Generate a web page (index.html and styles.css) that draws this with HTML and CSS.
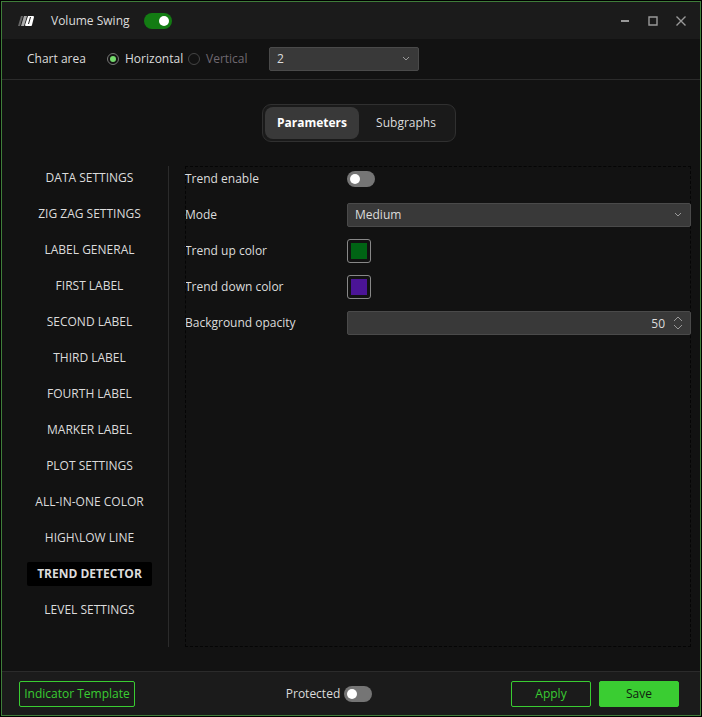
FILE: index.html
```html
<!DOCTYPE html>
<html lang="en">
<head>
    <meta charset="UTF-8">
    <meta name="viewport" content="width=device-width, initial-scale=1.0">
    <title>Volume Swing</title>
    <link rel="stylesheet" href="styles.css">
</head>
<body>
    <form class="window">
        <header class="titlebar">
            <svg class="logo" width="16" height="12" viewBox="0 0 16 12">
                <path d="M3 1h2L2 11H0z" fill="#666"/>
                <path d="M6 1h3L6 11H3z" fill="#aaa"/>
                <path d="M10 1h5q1 0 1 1l-2 8q0 1-1 1H8q-1 0-1-1zM12 2l-2 7h1l2-7z" fill="#fff" fill-rule="evenodd"/>
            </svg>
            <h1>Volume Swing</h1>
            <input type="checkbox" class="toggle" aria-label="Enable Volume Swing" checked>
            <div class="window-buttons">
                <button type="button" aria-label="Minimize">
                    <svg width="12" height="12" viewBox="0 0 12 12"><path d="M2 6h8" stroke-width="2"/></svg>
                </button>
                <button type="button" aria-label="Maximize">
                    <svg width="12" height="12" viewBox="0 0 12 12"><path d="M2 2h8v8H2z" stroke-width="1.400"/></svg>
                </button>
                <button type="button" aria-label="Close">
                    <svg width="12" height="12" viewBox="0 0 12 12"><path d="M1.500 1.500l9 9M10.500 1.500l-9 9" stroke-width="1.400"/></svg>
                </button>
            </div>
        </header>

        <div class="chart-area">
            <span class="chart-label">Chart area</span>
            <label class="radio"><input type="radio" name="area" checked>Horizontal</label>
            <label class="radio disabled"><input type="radio" name="area" disabled>Vertical</label>
            <div class="field area-select">
                <select aria-label="Chart area number"><option>2</option></select>
                <svg class="chevron" width="8" height="6" viewBox="0 0 8 6"><path d="M1 1l3 3 3-3"/></svg>
            </div>
        </div>

        <div class="tabs">
            <button type="button" class="tab active">Parameters</button>
            <button type="button" class="tab">Subgraphs</button>
        </div>

        <main class="content">
            <nav class="sections">
                <a href="#">DATA SETTINGS</a>
                <a href="#">ZIG ZAG SETTINGS</a>
                <a href="#">LABEL GENERAL</a>
                <a href="#">FIRST LABEL</a>
                <a href="#">SECOND LABEL</a>
                <a href="#">THIRD LABEL</a>
                <a href="#">FOURTH LABEL</a>
                <a href="#">MARKER LABEL</a>
                <a href="#">PLOT SETTINGS</a>
                <a href="#">ALL-IN-ONE COLOR</a>
                <a href="#">HIGH\LOW LINE</a>
                <a href="#" class="active">TREND DETECTOR</a>
                <a href="#">LEVEL SETTINGS</a>
            </nav>
            <div class="panel">
                <div class="row">
                    <label for="trend">Trend enable</label>
                    <input type="checkbox" class="toggle" id="trend">
                </div>
                <div class="row">
                    <label for="mode">Mode</label>
                    <div class="field">
                        <select id="mode"><option>Medium</option></select>
                        <svg class="chevron" width="8" height="6" viewBox="0 0 8 6"><path d="M1 1l3 3 3-3"/></svg>
                    </div>
                </div>
                <div class="row">
                    <label for="up">Trend up color</label>
                    <input type="color" id="up" value="#006414">
                </div>
                <div class="row">
                    <label for="down">Trend down color</label>
                    <input type="color" id="down" value="#4b1496">
                </div>
                <div class="row">
                    <label for="opacity">Background opacity</label>
                    <div class="field">
                        <input type="number" id="opacity" value="50">
                        <svg class="spinner" width="10" height="14" viewBox="0 0 10 14"><path d="M1 5l4-4 4 4M1 9l4 4 4-4"/></svg>
                    </div>
                </div>
            </div>
        </main>

        <footer class="footer">
            <button type="button" class="btn template">Indicator Template</button>
            <label class="protected">Protected<input type="checkbox" class="toggle"></label>
            <div class="actions">
                <button type="button" class="btn">Apply</button>
                <button type="submit" class="btn save">Save</button>
            </div>
        </footer>
    </form>
</body>
</html>
```

FILE: styles.css
```css
* {
    margin: 0;
    padding: 0;
    box-sizing: border-box;
}

body {
    padding: 1px;
    background: #000;
    color: #dcdcdc;
    font-family: "Open Sans", "Noto Sans", sans-serif;
    font-size: 12px;
    line-height: 16px;
}

button, input, select {
    font: inherit;
    color: inherit;
}

button {
    border: none;
    background: none;
    cursor: pointer;
}

svg {
    fill: none;
    stroke: #999;
    display: block;
}

.window {
    display: flex;
    flex-direction: column;
    min-height: calc(100vh - 2px);
    border: 1px solid #3f7d3a;
    background: #121212;
}

/* Title bar */
.titlebar {
    display: flex;
    align-items: center;
    height: 37px;
    padding: 0 5px 0 16px;
    background: #1b1b1b;
}

.logo {
    stroke: none;
}

h1 {
    min-width: 93px;
    margin-left: 17px;
    font-size: 12px;
    font-weight: normal;
}

.window-buttons {
    display: flex;
    margin-left: auto;
}

.window-buttons button {
    padding: 8px;
}

/* Toggle switch */
.toggle {
    display: flex;
    align-items: center;
    appearance: none;
    width: 28px;
    height: 16px;
    padding: 0 3px;
    border-radius: 8px;
    background: #757575;
}

.toggle::before {
    content: "";
    width: 10px;
    height: 10px;
    border-radius: 50%;
    background: #fff;
}

.toggle:checked {
    justify-content: flex-end;
    background: #137c13;
}

/* Chart area */
.chart-area {
    display: flex;
    align-items: center;
    height: 41px;
    padding-left: 25px;
    border-bottom: 1px solid #2b2b2b;
}

.chart-label {
    width: 80px;
}

.radio {
    display: flex;
    align-items: center;
    gap: 6px;
    width: 81px;
}

.radio.disabled {
    color: #6f6870;
}

.radio input {
    display: grid;
    place-items: center;
    appearance: none;
    width: 12px;
    height: 12px;
    border: 1px solid #777;
    border-radius: 50%;
}

.radio input:disabled {
    border-color: #444;
}

.radio input:checked::before {
    content: "";
    width: 6px;
    height: 6px;
    border-radius: 50%;
    background: #74d96c;
}

/* Fields */
.field {
    position: relative;
}

.field select,
.field input {
    display: block;
    appearance: none;
    width: 100%;
    height: 24px;
    padding: 0 7px;
    border: 1px solid #4a4a4a;
    border-radius: 2px;
    background: #393939;
}

.field input {
    padding-right: 25px;
    text-align: right;
    appearance: textfield;
}

.field input::-webkit-inner-spin-button {
    display: none;
}

.chevron {
    position: absolute;
    top: 9px;
    right: 9px;
}

.spinner {
    position: absolute;
    top: 5px;
    right: 8px;
}

.area-select {
    width: 150px;
}

/* Tabs */
.tabs {
    display: flex;
    align-self: center;
    margin: 24px 0 24px 16px;
    padding: 2px;
    border: 1px solid #303030;
    border-radius: 9px;
    background: #1a1a1a;
}

.tab {
    width: 94px;
    height: 32px;
    border-radius: 8px;
}

.tab.active {
    background: #393939;
    color: #fff;
    font-weight: bold;
}

/* Content */
.content {
    display: flex;
    flex: 1;
    gap: 16px;
    padding: 0 9px 24px 0;
}

.sections {
    display: flex;
    flex-direction: column;
    gap: 12px;
    width: 167px;
    padding: 0 16px 0 25px;
    border-right: 1px solid #2b2b2b;
}

.sections a {
    padding: 4px 0;
    border-radius: 2px;
    color: inherit;
    text-align: center;
    text-decoration: none;
    white-space: nowrap;
}

.sections a.active {
    background: #000;
    font-weight: bold;
}

.panel {
    flex: 1;
    display: flex;
    flex-direction: column;
    gap: 12px;
    padding-top: 1px;
    outline: 1px dashed #050505;
    outline-offset: -1px;
}

.row {
    display: grid;
    grid-template-columns: 162px 1fr;
    align-items: center;
    height: 24px;
}

.row input[type="color"] {
    width: 24px;
    height: 24px;
    padding: 3px;
    border: 1px solid #888;
    border-radius: 3px;
    background: none;
}

input[type="color"]::-webkit-color-swatch-wrapper {
    padding: 0;
}

input[type="color"]::-webkit-color-swatch {
    border: none;
}

/* Footer */
.footer {
    display: flex;
    align-items: center;
    justify-content: space-between;
    height: 44px;
    padding: 0 21px 0 17px;
    border-top: 1px solid #2b2b2b;
    background: #1b1b1b;
}

.btn {
    width: 80px;
    height: 26px;
    border: 1px solid #3acd32;
    border-radius: 2px;
    color: #3acd32;
}

.btn.template {
    width: 116px;
}

.btn.save {
    background: #3acd32;
    color: #102010;
}

.protected {
    display: flex;
    align-items: center;
    gap: 4px;
    margin-left: 12px;
}

.actions {
    display: flex;
    gap: 8px;
}
```
